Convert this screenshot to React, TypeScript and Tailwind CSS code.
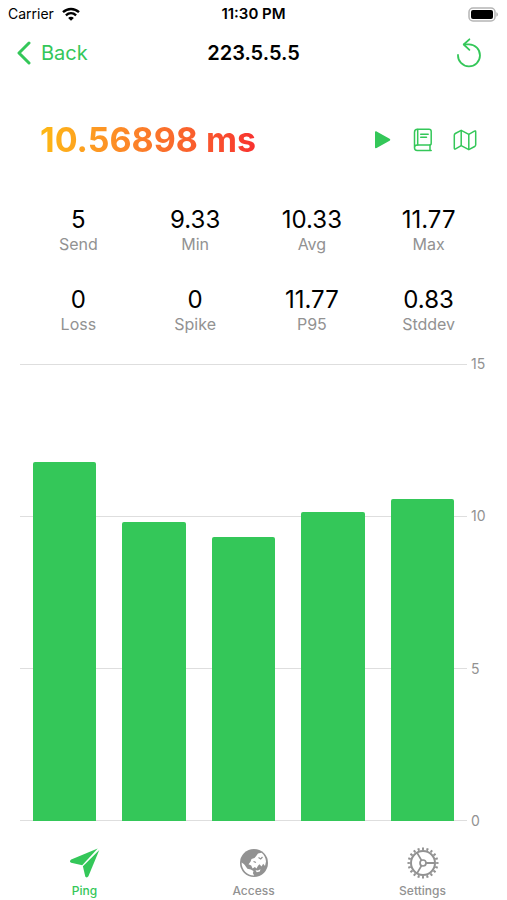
import React from 'react';

const stats = [
  { label: 'Send', value: '5' },
  { label: 'Min', value: '9.33' },
  { label: 'Avg', value: '10.33' },
  { label: 'Max', value: '11.77' },
  { label: 'Loss', value: '0' },
  { label: 'Spike', value: '0' },
  { label: 'P95', value: '11.77' },
  { label: 'Stddev', value: '0.83' },
];

const chartMax = 15;
const ticks = [15, 10, 5, 0];
const samples = [11.77, 9.83, 9.33, 10.14, 10.57];

const WifiIcon = () => (
  <svg width="18" height="14" viewBox="0 0 18 14" fill="none" stroke="currentColor" strokeWidth="2.4">
    <path d="M1 5.2C5.6.9 12.4.9 17 5.2" />
    <path d="M3.9 8.3c3-2.7 7.2-2.7 10.2 0" />
    <path d="M9 13.8 6.1 10.9c1.6-1.5 4.2-1.5 5.8 0z" fill="currentColor" stroke="none" />
  </svg>
);

const BatteryIcon = () => (
  <svg width="31" height="15" viewBox="0 0 31 15">
    <rect x="1" y="1" width="26" height="13" rx="4" fill="#fff" stroke="#b5b5b5" strokeWidth="1.5" />
    <rect x="3" y="3" width="22" height="9" rx="2" fill="#000" />
    <path d="M28.3 5.3c2.2.7 2.2 3.7 0 4.4z" fill="#b5b5b5" />
  </svg>
);

const ReloadIcon = () => (
  <svg width="24" height="30" viewBox="0 0 24 30" fill="none" stroke="currentColor" strokeWidth="1.8" strokeLinecap="round" strokeLinejoin="round">
    <path d="M1 17A11 11 0 1 0 12 6.4H7.2" />
    <path d="M12.4 1.3 6.7 6.5l5.7 5.3" />
  </svg>
);

const PlayIcon = () => (
  <svg width="17" height="18" viewBox="0 0 17 18" fill="currentColor">
    <path d="M1 1.4C1 .5 1.8.1 2.6.5l13 7.3c.9.5.9 1.4 0 1.9l-13 7.4C1.8 17.5 1 17 1 16.2z" />
  </svg>
);

const BookIcon = () => (
  <svg width="20" height="24" viewBox="0 0 20 24" fill="none" stroke="currentColor" strokeWidth="1.5" strokeLinecap="round" strokeLinejoin="round">
    <path d="M1.5 20V4.2C1.5 2.2 2.7 1.2 4.5 1.2H16c1.5 0 2.2.8 2.2 2.2v11.800c0 1.2-.7 1.9-1.900 1.9H4.200C2.5 17.1 1.5 18.2 1.5 19.700c0 1.600 1 2.700 2.700 2.700h14" />
    <path d="M4.700 1.400v15.500M17 17.300v5M7.700 6.200h7.500M7.700 9.200h5.800" />
  </svg>
);

const MapIcon = () => (
  <svg width="24" height="22" viewBox="0 0 24 22" fill="none" stroke="currentColor" strokeWidth="1.5" strokeLinejoin="round">
    <path d="M1.3 6.2c0-.8.3-1.3 1-1.700L8.200 1.300l7.600 4 5.600-3.200c.8-.4 1.300-.1 1.300.8v12.900c0 .8-.3 1.300-1 1.700l-5.900 3.200-7.600-4-5.600 3.200c-.8.4-1.300.1-1.300-.8z" />
    <path d="M8.200 1.500v15.200M15.800 5.300v15.200" />
  </svg>
);

const PlaneIcon = () => (
  <svg width="30" height="30" viewBox="0 0 30 30" fill="currentColor">
    <path d="M27.7.6 1.2 11.6c-1.5.7-1.5 2.700 0 3.100l11 2.500z" />
    <path d="M29.3 1.900 18.400 28.300c-.7 1.500-2.800 1.500-3.200 0l-2.300-10z" />
  </svg>
);

const GlobeIcon = () => (
  <svg width="30" height="30" viewBox="0 0 30 30">
    <circle cx="15" cy="15" r="14" fill="#929292" />
    <g fill="#fff">
      <path d="M19 5.500 22.500 4.800C25 6.600 26.800 9.800 27 13.500L26 18l-1.800-2.300-1.700 2.800-2-2.300-1.500 1.600-1.500 2.700-1.600-1.600-2.300 1.500-1.400-2.800-2.700-1.400 2-2.400 1-2.800 3-.9 1.500-1.900z" />
      <path d="M2.600 14.500c1.500 1 3 2 4 3.700l1.800 2.600 3.400.7 2.700 1.400-.6 2.300 1.300 2.200C8.300 27.600 2.500 22 2.600 14.500z" />
      <path d="m16.500 22.300 2.500.3 2.500-1.300-.7 2.200-3 .7z" />
    </g>
    <path d="m19.500 9.500 2.200 1.500 1.800-2M14.500 13.500l2.500 1" fill="none" stroke="#929292" strokeWidth="1.200" />
  </svg>
);

const GearIcon = () => (
  <svg width="32" height="32" viewBox="0 0 32 32" fill="none" stroke="currentColor">
    {/* 20 teeth around the rim */}
    <circle cx="16" cy="16" r="14.2" strokeWidth="2.6" pathLength="200" strokeDasharray="4.5 5.5" strokeDashoffset="2.25" />
    <circle cx="16" cy="16" r="12" strokeWidth="2" />
    <circle cx="16" cy="16" r="3" strokeWidth="1.7" />
    <path d="M19 16h9M14.500 13.400 10 5.600M14.500 18.600 10 26.400" strokeWidth="1.8" />
  </svg>
);

const tabs = [
  { name: 'Ping', icon: <PlaneIcon />, active: true },
  { name: 'Access', icon: <GlobeIcon />, active: false },
  { name: 'Settings', icon: <GearIcon />, active: false },
];

const App = () => {
  return (
    <div className="flex min-h-screen flex-col bg-white font-['Inter',sans-serif] text-black">
      {/* Status bar */}
      <div className="grid h-7 grid-cols-3 items-center px-2 text-sm">
        <div className="flex items-center gap-2">
          <span>Carrier</span>
          <WifiIcon />
        </div>
        <span className="text-center text-[15px] font-semibold">11:30 PM</span>
        <div className="flex justify-end">
          <BatteryIcon />
        </div>
      </div>

      {/* Navigation */}
      <header className="grid h-[50px] grid-cols-3 items-center px-4">
        <button className="flex items-center gap-2.5 text-xl text-[#34c759]">
          <svg width="15" height="24" viewBox="0 0 15 24" fill="none" stroke="currentColor" strokeWidth="3" strokeLinecap="round" strokeLinejoin="round">
            <path d="M13 2 3 12l10 10" />
          </svg>
          Back
        </button>
        <h1 className="text-center text-xl font-semibold">223.5.5.5</h1>
        <button aria-label="Reload" className="mr-2.5 justify-self-end text-[#34c759]">
          <ReloadIcon />
        </button>
      </header>

      {/* Latest result */}
      <div className="mt-[34px] flex h-14 items-center justify-between pr-[30px] pl-10">
        <p className="bg-gradient-to-r from-[#fdb913] via-[#fa6c2c] via-60% to-[#f8302f] bg-clip-text text-[34px] leading-10 font-bold text-transparent">
          10.56898 ms
        </p>
        <div className="flex items-center gap-5 text-[#34c759]">
          <button aria-label="Start" className="mr-0.5"><PlayIcon /></button>
          <button aria-label="Log"><BookIcon /></button>
          <button aria-label="Route"><MapIcon /></button>
        </div>
      </div>

      {/* Statistics */}
      <dl className="mt-10 grid grid-cols-4 gap-y-8 px-5 text-center">
        {stats.map((stat) => (
          <div key={stat.label} className="flex flex-col-reverse">
            <dt className="text-base leading-6 text-[#929292]">{stat.label}</dt>
            <dd className="text-2xl leading-6">{stat.value}</dd>
          </div>
        ))}
      </dl>

      {/* Chart */}
      <div className="relative mt-7 mr-2 ml-5 flex flex-1">
        <div className="absolute inset-0 flex flex-col justify-between">
          {ticks.map((tick) => (
            <div key={tick} className="flex h-0 items-center gap-1">
              <span className="h-px flex-1 bg-[#dedede]" />
              <span className="w-7 text-sm text-[#929292]">{tick}</span>
            </div>
          ))}
        </div>
        <div className="relative mr-8 grid flex-1 grid-cols-5">
          {samples.map((ms, i) => (
            <div key={i} className="flex items-end px-[13px]">
              <div
                className="w-full rounded-t-xs bg-[#34c759]"
                style={{ height: `${(ms / chartMax) * 100}%` }}
              />
            </div>
          ))}
        </div>
      </div>

      {/* Tab bar */}
      <nav className="grid h-[79px] grid-cols-3 pt-6">
        {tabs.map((tab) => (
          <button
            key={tab.name}
            className={`flex flex-col items-center text-xs font-medium ${tab.active ? 'text-[#34c759]' : 'text-[#929292]'}`}
          >
            <span className="flex h-9 items-center">{tab.icon}</span>
            <span className="mt-0.5">{tab.name}</span>
          </button>
        ))}
      </nav>
    </div>
  );
};

export default App;
